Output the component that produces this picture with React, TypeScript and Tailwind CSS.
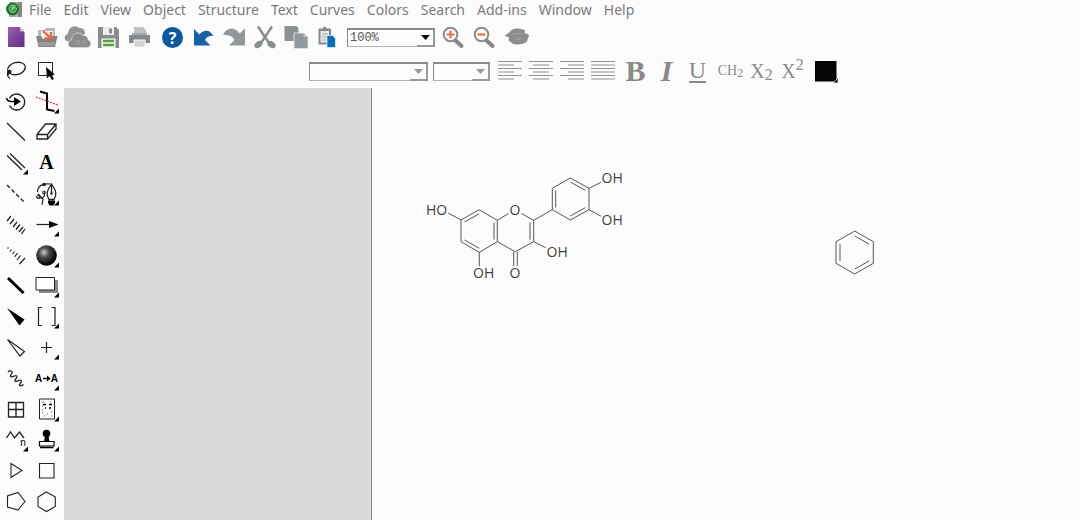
import type { ReactNode } from "react";

const INK = "#222";

function Icon({ children }: { children: ReactNode }) {
  return (
    <svg viewBox="0 0 31 31" className="block size-[31px] shrink-0" fill="none" aria-hidden="true">
      {children}
    </svg>
  );
}

function IconButton({ label, children, className = "" }: { label: string; children: ReactNode; className?: string }) {
  return (
    <button type="button" aria-label={label} title={label} className={`flex w-[31px] shrink-0 items-center justify-center ${className}`}>
      {children}
    </button>
  );
}

const More = () => <path d="M28 22.500v5h-5Z" fill="#000" />;

function Combo({ label, options, width, muted }: { label: string; options: string[]; width: string; muted?: boolean }) {
  return (
    <div className={`relative flex h-[19px] shrink-0 ${width}`}>
      <select
        aria-label={label}
        className="h-full w-full appearance-none border border-t-2 border-[#8a8a8a] border-b-[#b5b5b5] bg-[#fcfcfc] py-0 pl-0.5 font-['Liberation_Mono',monospace] text-xs leading-4 text-[#555]"
      >
        {options.map((o) => (
          <option key={o}>{o}</option>
        ))}
      </select>
      <span className="pointer-events-none absolute top-[2px] right-0 bottom-0 flex w-[18px] items-center justify-center border-r-2 border-b-2 border-[#999] bg-[#fcfcfc]">
        <svg viewBox="0 0 9 5" className="h-[5px] w-[9px]" aria-hidden="true">
          <path d="M0 0h9L4.500 5Z" fill={muted ? "#999" : "#000"} />
        </svg>
      </span>
    </div>
  );
}

const menus = ["File", "Edit", "View", "Object", "Structure", "Text", "Curves", "Colors", "Search", "Add-ins", "Window", "Help"];

function MenuBar() {
  return (
    <nav className="flex h-5 items-center pb-px pl-[6px] font-['Noto_Sans',sans-serif] text-sm leading-[18px] text-[#7a7a7a]">
      <svg viewBox="0 0 17 17" className="mr-[6px] size-[17px] shrink-0" aria-hidden="true">
        <path d="M3 1h13v15H3Z" fill="#a9aaa7" />
        <path d="M12 1h4v15h-4Z" fill="#858985" />
        <circle cx="6.500" cy="8" r="6.500" fill="#23752d" />
        <path d="M3 7.500 5 4.500h3.500L10.500 8 8.500 11H5Z" fill="none" stroke="#74c878" strokeWidth="1.300" />
        <path d="M6 6v4M6 6h2v2H6" fill="none" stroke="#a7e9a4" />
      </svg>
      <div className="flex gap-3">
        {menus.map((m) => (
          <button key={m} type="button">
            {m}
          </button>
        ))}
      </div>
    </nav>
  );
}

function Magnifier({ plus }: { plus?: boolean }) {
  return (
    <Icon>
      <path d="m18 18 6.500 6" stroke="#82878a" strokeWidth="4" strokeLinecap="round" />
      <circle cx="13.500" cy="12.500" r="6.800" fill="#fff" stroke="#888d90" strokeWidth="2" />
      <path d={plus ? "M9.500 12.500h8M13.500 8.500v8" : "M9.500 12.500h8"} stroke="#e4733c" strokeWidth="2.200" />
    </Icon>
  );
}

function MainToolbar() {
  return (
    <div className="flex h-[35px] items-center">
      <IconButton label="New">
        <Icon>
          <defs>
            <linearGradient id="page" x1="0" y1="0" x2="1" y2="1">
              <stop stopColor="#9a62ae" />
              <stop offset="1" stopColor="#5f2a82" />
            </linearGradient>
          </defs>
          <path d="M8 5h11.500l5 5v15H8Z" fill="url(#page)" />
          <path d="m20 5 4.500 4.500H20Z" fill="#c9b4d4" />
        </Icon>
      </IconButton>
      <IconButton label="Open">
        <Icon>
          <path d="M7 14V8h6l2-2h9v8" fill="#b6b8b9" />
          <path d="M10 9h12v8H10Z" fill="#f6f1ed" />
          <path d="M5 14h5l2 3h7l2-3h5.500l-2.500 11H7.500Z" fill="#808487" />
          <path d="M7 20h17l-1 4H8Z" fill="#999c9e" />
          <path d="m12 9 7 6.500M20 10v6.500h-6.500" stroke="#e5683a" strokeWidth="2.300" />
        </Icon>
      </IconButton>
      <IconButton label="Open from cloud">
        <Icon>
          <path d="M6.500 19.500c-5-.5-5-6.500-.5-7.500C6 5 13 2 17 6c4-.5 6 2 6 5.500l-9 8Z" fill="#939393" />
          <path d="M10.500 25.500C5 25.500 5 18.500 9.500 18c0-7 8-9 11.500-4.500 3.500 0 5 2 5 4.500 4 1 3.500 7.500-1 7.500Z" fill="#8b8b8b" stroke="#dadada" strokeWidth=".8" />
          <path d="M14 19h4v3h-4Zm6 0h3v3h-3" stroke="#a1a1a1" />
        </Icon>
      </IconButton>
      <IconButton label="Save">
        <Icon>
          <path d="M5 5h18l3 3v18H5Z" fill="#888d90" />
          <path d="M10 5h11v8H10Z" fill="#eee" />
          <path d="M16 6.500h3v5h-3Z" fill="#888d90" />
          <path d="M8.500 16.500h14V26h-14Z" fill="#f4f7f1" />
          <path d="M10 19h11M10 23h11" stroke="#5ca238" strokeWidth="2.300" />
        </Icon>
      </IconButton>
      <IconButton label="Print">
        <Icon>
          <path d="M10 5h9l3 3v6H10Z" fill="#bfc1c2" />
          <path d="M5 13h21v8H5Z" fill="#85898c" />
          <path d="M8 11h15v2H8Z" fill="#a8aaab" />
          <path d="M10 18h11v7H10Z" fill="#d1d2d3" stroke="#f8f8f8" />
        </Icon>
      </IconButton>
      <IconButton label="Help" className="ml-px pl-0.5">
        <span className="flex size-[21px] items-center justify-center rounded-full bg-[#08599f] font-['Open_Sans',sans-serif] text-base leading-none font-bold text-white">
          ?
        </span>
      </IconButton>
      <IconButton label="Undo">
        <Icon>
          <path d="M7 7v16.500h16.500L18 18c1.500-3 4-4.500 8-4-2-6-9-7.500-13.500-1.500Z" fill="#1464a5" />
        </Icon>
      </IconButton>
      <IconButton label="Redo">
        <Icon>
          <path d="M27 6.500v17H11l5.500-5.500c-2-4-5.500-5.500-11.500-5C9 5 16.500 4.500 21.500 11.500Z" fill="#90989b" />
        </Icon>
      </IconButton>
      <IconButton label="Cut">
        <Icon>
          <path d="M9 4.500 20 21M23 4.500 12 21" stroke="#888d8f" strokeWidth="2.400" />
          <ellipse cx="9.500" cy="22.500" rx="4.500" ry="3" fill="#888d8f" transform="rotate(-35 9.500 22.500)" />
          <ellipse cx="22.500" cy="22.500" rx="4.500" ry="3" fill="#888d8f" transform="rotate(35 22.500 22.500)" />
        </Icon>
      </IconButton>
      <IconButton label="Copy">
        <Icon>
          <path d="M4.500 4h12l2 2v13h-14Z" fill="#8b9092" />
          <path d="M14 11h10l4 4v11.500H14Z" fill="#8f999e" stroke="#e9ebec" strokeWidth=".8" />
          <path d="m23.500 11 4 4h-4Z" fill="#c0c5c7" />
        </Icon>
      </IconButton>
      <IconButton label="Paste">
        <Icon>
          <path d="M8.500 7.500h10.500v14H8.500Z" fill="#e6e8e8" stroke="#84898c" strokeWidth="2" />
          <path d="M10 9V7h2c0-3.500 3.500-3.500 3.500 0h2v2Z" fill="#84898c" />
          <path d="M11 12h6M11 15h5M11 18h4" stroke="#aaa" />
          <path d="M16 13.500h5.500l3 3v9H16Z" fill="#0871bd" stroke="#fff" strokeWidth=".6" />
        </Icon>
      </IconButton>
      <div className="ml-[5px]">
        <Combo label="Zoom" options={["100%", "200%"]} width="w-[88px]" />
      </div>
      <IconButton label="Zoom in" className="ml-0.5">
        <Magnifier plus />
      </IconButton>
      <IconButton label="Zoom out">
        <Magnifier />
      </IconButton>
      <IconButton label="Search chemicals" className="ml-0.5">
        <Icon>
          <path d="M3.500 14c2-1.500 3-2.500 5.500-4 1-3.500 8-4.500 13-2.500 2 0 3 2 1 3.500l4 1c1.500 2 1 3-.5 4.500 1 4-5 6-9 6-4 .5-7-1-8-3-3 0-2-2.500-1-4Z" fill="#8c8c8c" />
          <path d="M12 12.500c3-1.500 6-1 9-1M15 16.500c2 1 4 .5 6 0" stroke="#a9a9a9" />
        </Icon>
      </IconButton>
    </div>
  );
}

const alignments = [
  { label: "Align left", d: "M4 5.500h24M4 9h16M4 12.500h24M4 16h16M4 19.500h24M4 23h16" },
  { label: "Align center", d: "M4 5.500h24M8 9h16M4 12.500h24M8 16h16M4 19.500h24M8 23h16" },
  { label: "Align right", d: "M4 5.500h24M12 9h16M4 12.500h24M12 16h16M4 19.500h24M12 23h16" },
  { label: "Justify", d: "M4 5.500h24M4 9h24M4 12.500h24M4 16h24M4 19.500h24M4 23h24" },
];

function FormatBar() {
  return (
    <div className="flex h-[33px] items-center pb-px pl-[245px] font-['Liberation_Serif',serif] text-[#8a8a8a]">
      <div className="flex gap-[5px] pr-1">
        <Combo label="Font" options={["", "Arial"]} width="w-[119px]" muted />
        <Combo label="Size" options={["", "10"]} width="w-[57px]" muted />
      </div>
      {alignments.map((a) => (
        <IconButton key={a.label} label={a.label}>
          <Icon>
            <path d={a.d} stroke="#929292" strokeWidth="1.200" />
          </Icon>
        </IconButton>
      ))}
      <IconButton label="Bold" className="ml-0.5 text-[30px] leading-8 font-bold">
        B
      </IconButton>
      <IconButton label="Italic" className="text-[30px] leading-8 font-bold italic">
        I
      </IconButton>
      <IconButton label="Underline">
        <span className="border-b-2 border-[#8a8a8a] pb-px text-2xl leading-5">U</span>
      </IconButton>
      <IconButton label="Formula" className="ml-0.5 text-sm">
        <span>
          CH<span className="relative top-0.5 text-xs">2</span>
        </span>
      </IconButton>
      <IconButton label="Subscript" className="text-xl leading-6">
        <span>
          X<span className="relative top-0.5 text-base leading-none">2</span>
        </span>
      </IconButton>
      <IconButton label="Superscript" className="text-xl leading-6">
        <span>
          X<span className="relative -top-2 text-base leading-none">2</span>
        </span>
      </IconButton>
      <IconButton label="Color" className="ml-0.5">
        <Icon>
          <path d="M5 5h21.500v20.500H5Z" fill="#050505" />
          <path d="M28 22v5h-5Z" fill="#000" stroke="#fcfcfc" strokeWidth=".7" />
        </Icon>
      </IconButton>
    </div>
  );
}

const tools: { label: string; art: ReactNode; more?: boolean; text?: ReactNode }[] = [
  {
    label: "Lasso",
    art: (
      <g stroke={INK} strokeWidth="1.300">
        <ellipse cx="16.500" cy="13.500" rx="9" ry="6" transform="rotate(-15 16.500 13.500)" />
        <path d="M9 16c-2 1-2 3 0 3.500M8.500 18c-2 1-1 3.500 1.500 5.500" />
        <circle cx="9.500" cy="17" r="1.500" fill={INK} />
      </g>
    ),
  },
  {
    label: "Marquee",
    art: (
      <>
        <path d="M7.500 7.500h14v13h-14Z" stroke={INK} />
        <path d="m15 12 9 7.500-3.500.5 2.500 4-2 1-2.500-4-2.500 2.500Z" fill="#000" />
      </>
    ),
  },
  {
    label: "Rotate",
    art: (
      <>
        <path d="M9.500 19.500a8 8 0 1 0 0-7" stroke={INK} strokeWidth="1.300" />
        <path d="M6.500 12c.5 2 1.500 3.500 4.500 3.500h4" stroke="#000" strokeWidth="1.500" />
        <path d="m14 11 7 4.500-7 4.500Z" fill="#000" />
      </>
    ),
  },
  {
    label: "Fragment",
    more: true,
    art: (
      <>
        <path d="m9 5.500 7 2v16l7.500 1.500" stroke="#000" strokeWidth="2" />
        <path d="m5 11 22 8" stroke="#e23a3a" strokeWidth="1.200" strokeDasharray="2 1" />
      </>
    ),
  },
  { label: "Solid bond", art: <path d="m7 7 18 17.500" stroke={INK} strokeWidth="1.300" /> },
  {
    label: "Eraser",
    art: <path d="M6 18.500 14.500 8h10.500v5l-8.500 10H6Zm0 0h10.500L25 8M16.500 18.500V23" stroke={INK} strokeWidth="1.300" />,
  },
  { label: "Multiple bonds", more: true, art: <path d="m7 8.500 15 14.500M10 6.500 25 21" stroke={INK} strokeWidth="1.300" /> },
  { label: "Text", art: null, text: <span className="font-['Liberation_Serif',serif] text-xl leading-none font-bold">A</span> },
  { label: "Dashed bond", art: <path d="m7 7 17.500 17.500" stroke={INK} strokeWidth="1.400" strokeDasharray="4 2.500" /> },
  {
    label: "Pen",
    more: true,
    art: (
      <>
        <path d="M18 21.500c-3-5-2.500-8 2.500-15.500 5 7.500 5.500 10.500 2.500 15.500ZM20.500 7v8" stroke={INK} strokeWidth="1.300" />
        <circle cx="20.500" cy="15.500" r="1.200" fill={INK} />
        <path d="M17 22.500h7v2.500l-1.500 2.500h-4L17 25Z" fill="#000" />
        <path d="M6.500 14c0-6 5-9 13-8M6 20c5 1 9-1 7-6M7 16l5 5-1 6" stroke={INK} strokeWidth="1.200" />
        <circle cx="7" cy="19" r="1.500" stroke={INK} />
        <circle cx="13" cy="14.500" r="1.500" stroke={INK} />
        <path d="M11.500 5h3v3h-3Z" fill={INK} />
      </>
    ),
  },
  { label: "Hashed bond", art: <path d="m7 12 4-5M10 15l4-5M13 18l4-5M16 20.500l4-5M19 23l4-5M21.500 25l3.500-5" stroke={INK} strokeWidth="1.300" /> },
  {
    label: "Arrow",
    more: true,
    art: (
      <>
        <path d="M5.500 15.500H20" stroke={INK} strokeWidth="1.200" />
        <path d="m18 12 9.500 3.500L18 19Z" fill="#000" />
      </>
    ),
  },
  { label: "Hashed wedge", art: <path d="m7.500 8.500 1-1M10 11.500l1.500-2M12.500 14l2-2.500M14.500 17l3-4M17 20l3.500-4.500M19.500 24l5.500-6" stroke={INK} strokeWidth="1.200" /> },
  {
    label: "Orbital",
    more: true,
    art: (
      <>
        <defs>
          <radialGradient id="ball" cx=".38" cy=".35" r=".6">
            <stop stopColor="#ccc" />
            <stop offset=".4" stopColor="#4c4c4c" />
            <stop offset="1" stopColor="#050505" />
          </radialGradient>
        </defs>
        <circle cx="15.500" cy="15.500" r="10.300" fill="url(#ball)" />
      </>
    ),
  },
  { label: "Bold bond", art: <path d="m8 8 15.500 15" stroke="#000" strokeWidth="3" /> },
  {
    label: "Box",
    more: true,
    art: (
      <>
        <path d="M8 10h19v13H8Z" fill="#8a8a8a" />
        <path d="M5 7.500h18.500V20H5Z" fill="#fff" stroke={INK} />
      </>
    ),
  },
  { label: "Wedge bond", art: <path d="m7 7 17.500 11.500-5 6Z" fill="#000" /> },
  { label: "Brackets", more: true, art: <path d="M11 6.500H7.500v18H11M20.500 6.500H24v18h-3.500" stroke={INK} strokeWidth="1.200" /> },
  { label: "Hollow wedge", art: <path d="m7.500 7.500 17 12-4.500 4.500Z" stroke={INK} strokeWidth="1.200" /> },
  { label: "Plus", more: true, art: <path d="M10 15.500h11M15.500 10v11" stroke={INK} strokeWidth="1.200" /> },
  {
    label: "Wavy bond",
    art: (
      <path
        d="M8 9c2-2 5-1 4 1l-1.500 2.500c-.5 2 2 1.500 4 .5s3 0 2 2L15 17c-.5 2 2 1.500 4 .5s3 0 2 2l-1.500 2c-.5 2 2 1.500 4 0"
        stroke={INK}
        strokeWidth="1.300"
      />
    ),
  },
  {
    label: "Reaction mapping",
    more: true,
    art: (
      <>
        <path d="M12 15.500h6" stroke="#000" strokeWidth="1.500" />
        <path d="m16 12.500 3.500 3-3.500 3Z" fill="#000" />
      </>
    ),
    text: (
      <span className="flex w-[23px] justify-between pt-0.5 font-['Liberation_Sans',sans-serif] text-[10px] leading-none font-bold">
        <span>A</span>
        <span>A</span>
      </span>
    ),
  },
  { label: "Table", art: <path d="M8.500 8.500h15v14.500h-15ZM16 8.500V23M8.500 15.500h15" stroke={INK} strokeWidth="1.300" /> },
  {
    label: "Templates",
    more: true,
    art: (
      <>
        <path d="M8.500 5h15v20h-15Z" stroke={INK} />
        <path d="M11 8h2M11 12h1M11 16h1M11 19h1M13 22h1M19 8h1M20 22h1M20 18h1M16 20h1" stroke="#666" />
        <path d="M12 10.500h3M18 10.500h3M18 14h2M14 14h1" stroke="#000" strokeWidth="1.500" />
      </>
    ),
  },
  {
    label: "Chain",
    more: true,
    art: <path d="m6.500 14 4-6 4 6 5-6 4.500 6" stroke={INK} strokeWidth="1.300" />,
    text: <span className="pt-2 pl-[15px] font-['Liberation_Sans',sans-serif] text-[10px] leading-none">n</span>,
  },
  {
    label: "Stamp",
    more: true,
    art: (
      <>
        <circle cx="15.500" cy="9.500" r="3.800" fill="#000" />
        <path d="M14 12h3.500l1 6h-5.500Z" fill="#000" />
        <path d="M8.500 17.500h14.500v4.500H8.500Z" stroke="#000" strokeWidth="1.200" />
        <path d="M9 23.500h13.500" stroke="#000" strokeWidth="1.500" />
      </>
    ),
  },
  { label: "Play", art: <path d="m11 8.500 11 7-11 7Z" stroke={INK} strokeWidth="1.100" /> },
  { label: "Square ring", art: <path d="M8.500 8.500h14.500V23H8.500Z" stroke={INK} strokeWidth="1.100" /> },
  { label: "Cyclopentane ring", art: <path d="m25 15.500-7-9-10.500 3.500v11L18 24Z" stroke={INK} strokeWidth="1.100" /> },
  { label: "Cyclohexane ring", art: <path d="m15.500 6 8.800 5v9.500l-8.800 5-8.500-5V11Z" stroke={INK} strokeWidth="1.100" /> },
];

function Palette() {
  return (
    <aside className="grid w-[64px] shrink-0 auto-rows-fr grid-cols-2 pr-0.5 pb-[3px]">
      {tools.map((t) => (
        <button key={t.label} type="button" aria-label={t.label} title={t.label} className="grid place-items-center text-black">
          <span className="col-start-1 row-start-1 -my-1">
            <Icon>
              {t.art}
              {t.more && <More />}
            </Icon>
          </span>
          {t.text && <span className="col-start-1 row-start-1">{t.text}</span>}
        </button>
      ))}
    </aside>
  );
}

function Quercetin() {
  return (
    <svg viewBox="0 0 225 120" className="absolute top-[77px] left-[38px] h-[120px] w-[225px]" role="img" aria-label="Quercetin">
      <g fill="none" stroke="#555" strokeWidth="1">
        <path d="M51 55 69 44.700 87.300 55.300V76.700L69.300 87.300 51 76.700ZM38 48l13 7M69.300 87.300V101" />
        <path d="M54.500 57 69 48.800M84 57.500v17M69.300 83.300 54.500 75" />
        <path d="M87.300 55.300 98.500 48.500M111.500 48.500l12.200 6.800V76.700L105.300 86.700l-18-10M120 57.500v17M103.700 87v14M107.300 87v14M123.700 76.700l12 6" />
        <path d="m123.700 55.300 18.600-10.600V23.300L160.300 13 179 23.300v21.400L160.300 55l-18-10.300M145.700 42.500v-17M160.300 17l15 8.300M175.300 42.700l-15 8.300M179 23.300l12-6M179 44.700l12 6.500" />
      </g>
      <g className="fill-[#404040] font-['Open_Sans',sans-serif] text-[14px]">
        <text x="16" y="50">HO</text>
        <text x="99.500" y="50">O</text>
        <text x="63" y="113">OH</text>
        <text x="99.500" y="113">O</text>
        <text x="136.500" y="92">OH</text>
        <text x="191.500" y="18">OH</text>
        <text x="191.500" y="60">OH</text>
      </g>
    </svg>
  );
}

function Benzene() {
  return (
    <svg viewBox="0 0 70 70" className="absolute top-[127px] left-[448px] size-[70px]" role="img" aria-label="Benzene" fill="none" stroke="#555">
      <path d="m34.700 16 18.600 10.700v21.600L34.700 59 16 48.300V26.700ZM20 29v17M34.700 21l14.300 8M49 46l-14.300 8" />
    </svg>
  );
}

export default function App() {
  return (
    <div className="flex min-h-screen flex-col bg-[#fcfcfc]">
      <MenuBar />
      <MainToolbar />
      <div className="flex flex-1">
        <Palette />
        <div className="flex min-w-0 flex-1 flex-col">
          <FormatBar />
          <main className="flex flex-1">
            <div className="w-[308px] shrink-0 border-r border-[#858585] bg-[#dbdbdb]" />
            <div className="relative flex-1 overflow-hidden">
              <Quercetin />
              <Benzene />
            </div>
          </main>
        </div>
      </div>
    </div>
  );
}
